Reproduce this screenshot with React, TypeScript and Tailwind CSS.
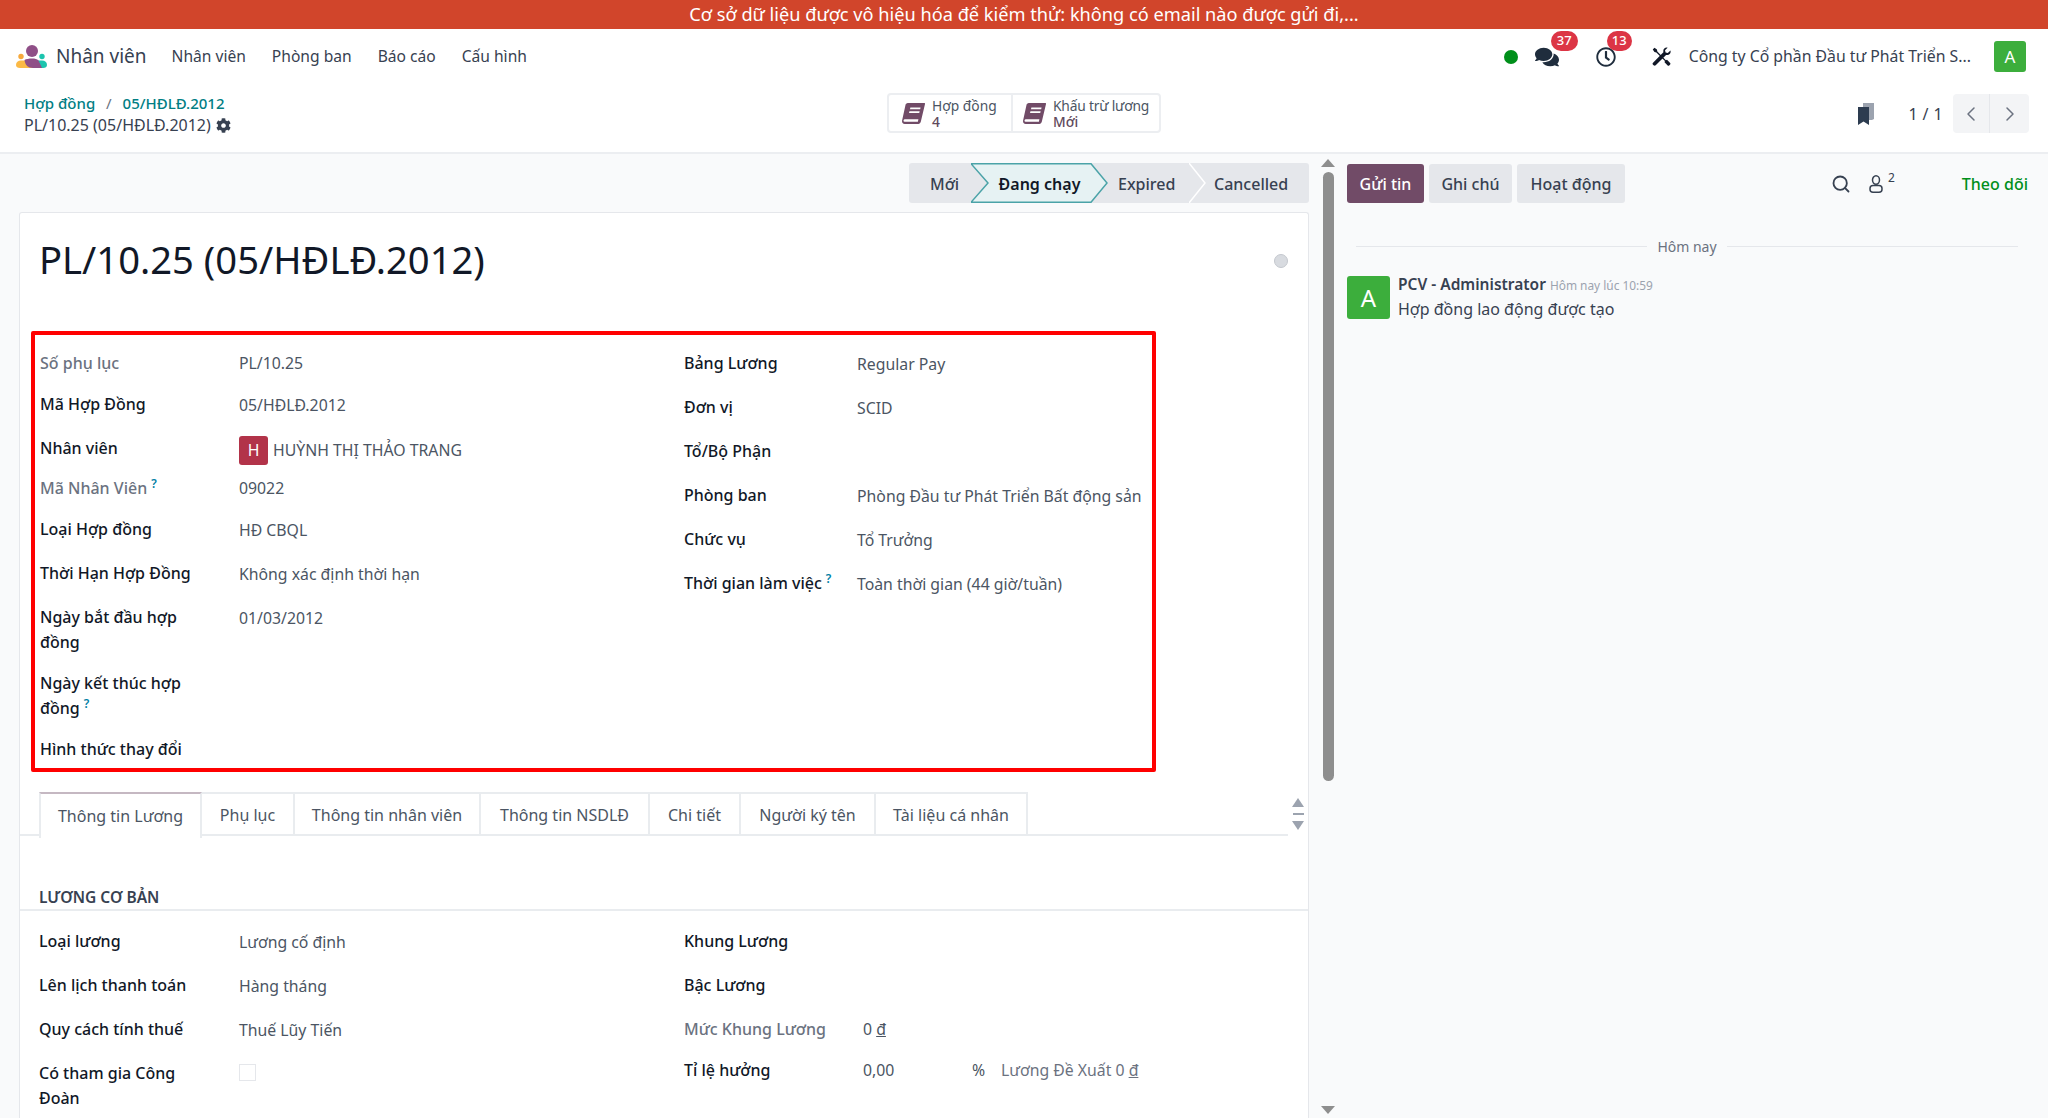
import React from 'react';
import { FaCog, FaComments, FaRegClock } from 'react-icons/fa';
import { ChevronLeft, ChevronRight, Search } from 'lucide-react';

const Help = () => <sup className="ml-1 text-[12px] font-semibold text-[#0180a5]">?</sup>;

const BookIcon = () => (
  <svg viewBox="0 0 24 24" className="h-[25px] w-[25px] shrink-0">
    <path
      fill="#714b67"
      d="M6.6 2H22.2c.7 0 1 .5.8 1.2L19 20c-.3 1.2-1.1 2-2.4 2H3.6C1.9 22 .7 20.6 1 18.9L4.2 4.2C4.5 2.9 5.3 2 6.6 2Zm2.4 4.2-.4 1.6h9.8l.4-1.6H9Zm-.9 3.7-.4 1.6h9.8l.4-1.6H8.100Z"
    />
    <path fill="#fff" d="M3.500 17.400h13.200l-.5 2.500H3.400c-1.400 0-1.300-2.500.1-2.500Z" />
  </svg>
);

const Logo = () => (
  <svg viewBox="0 0 31 23" className="h-[23px] w-[31px] shrink-0">
    <path d="M0 20c0-3 2-4.500 5-4.500h7L18 23H4c-2.500 0-4-1-4-3Z" fill="#fbb945" />
    <path d="M31 20c0-3-2-4.500-5-4.500h-8L24 23h3c2.500 0 4-1 4-3Z" fill="#1cc4ae" />
    <path d="M8.500 15c1.500-1 4.500-1.500 7.500-1.500s5 .5 6.500 2L26 23h-9c-5 0-8-3-8.500-8Z" fill="#8f4f87" />
    <circle cx="16" cy="6" r="6" fill="#8f4f87" />
    <circle cx="5" cy="11.500" r="2.700" fill="#f7a93c" />
    <circle cx="26" cy="11.500" r="2.700" fill="#1cc4ae" />
  </svg>
);

const ToolsIcon = () => (
  <svg viewBox="0 0 20 20" className="ml-[36px] h-[19px] w-[19px] text-[#111827]" fill="currentColor">
    <path d="M2.600.800 5.200 2.700l.4 2 9 9.200 1.200-.4 3.300 3.300c.5.500.5 1.100 0 1.600l-1 1c-.5.500-1.100.500-1.600 0l-3.300-3.300.4-1.300-9-9-2-.5L.800 2.600Z" />
    <path d="M19.400 3.600 16.600 6.300l-2.300-.6-.6-2.300L16.400.700c-2.300-.7-4.700 1.200-4.500 3.700l.1 1.100-10.900 11c-.7.700-.7 1.500 0 2.200l.6.600c.7.700 1.500.7 2.200 0l10.900-11 1.100.1c2.500.2 4.400-2.200 3.500-4.800Z" />
  </svg>
);

const Tab = ({ label, w, active }: { label: string; w: string; active?: boolean }) => (
  <div
    className={`${w} flex items-center justify-center border-r-2 border-[#e9ecef] text-[16px] text-[#4b5563] ${
      active ? 'h-[46px] border-t-2 border-l-2 border-t-[#c5b8c2] bg-white' : 'h-[44px] border-t-2 border-t-[#e9ecef]'
    }`}
  >
    {label}
  </div>
);

const Field = ({
  label,
  value,
  h,
  labelW,
  muted,
  help,
  offset,
}: {
  label: string;
  value?: React.ReactNode;
  h: string;
  labelW: string;
  muted?: boolean;
  help?: boolean;
  offset?: string;
}) => (
  <div className={`flex ${h} items-start`}>
    <div className={`${labelW} shrink-0 text-[16px] leading-[25px] font-medium ${muted ? 'text-[#6b7280]' : 'text-[#111827]'}`}>
      {label}
      {help && <Help />}
    </div>
    <div className={`text-[15.800px] leading-[25px] text-[#4b5563] ${offset ?? ''}`}>{value}</div>
  </div>
);

const LEFT = 'w-[199px] pr-[36px]';
const RIGHT = 'w-[173px] pr-[4px]';

export default function App() {
  return (
    <div className="flex h-[1118px] w-[2048px] flex-col overflow-hidden bg-white font-['Noto_Sans',sans-serif] text-[#374151]">
      <div className="flex h-[29px] shrink-0 items-center justify-center bg-[#d1452b] text-[18.200px] text-white">
        Cơ sở dữ liệu được vô hiệu hóa để kiểm thử: không có email nào được gửi đi,...
      </div>

      {/* nav */}
      <div className="flex h-[57px] shrink-0 items-center pr-[22px] pb-[2px] pl-[16px]">
        <Logo />
        <span className="ml-[9px] text-[19px] text-[#374151]">Nhân viên</span>
        <div className="ml-[25px] flex gap-[26px] text-[15.600px] text-[#374151]">
          <span>Nhân viên</span>
          <span>Phòng ban</span>
          <span>Báo cáo</span>
          <span>Cấu hình</span>
        </div>
        <div className="ml-auto flex items-center">
          <span className="h-[14px] w-[14px] rounded-full bg-[#008f1a]" />
          <div className="relative ml-[17px] text-[#1f2d3d]">
            <FaComments className="h-[24px] w-[24px]" />
            <span className="absolute -top-[14px] left-[16px] flex h-[20px] w-[27px] items-center justify-center rounded-full bg-[#dc3545] text-[13px] font-medium text-white">37</span>
          </div>
          <div className="relative ml-[37px] text-[#1f2d3d]">
            <FaRegClock className="h-[20px] w-[20px]" />
            <span className="absolute -top-[16px] left-[11px] flex h-[20px] w-[25px] items-center justify-center rounded-full bg-[#dc3545] text-[13px] font-medium text-white">13</span>
          </div>
          <ToolsIcon />
          <span className="ml-[18px] text-[15.800px] text-[#374151]">Công ty Cổ phần Đầu tư Phát Triển S...</span>
          <div className="ml-[23px] flex h-[31px] w-[32px] items-center justify-center rounded-[3px] bg-[#3cae3c] text-[17px] text-white">A</div>
        </div>
      </div>

      {/* control panel */}
      <div className="flex h-[68px] shrink-0 items-start border-b-2 border-[#eceef1] pr-[19px] pl-[24px]">
        <div className="w-[863px] pt-[7px] text-[16px] leading-[21px]">
          <div className="mb-[1px] text-[15px] font-medium text-[#017e84]">
            Hợp đồng <span className="mx-[7px] font-normal text-[#6b7280]">/</span> 05/HĐLĐ.2012
          </div>
          <div className="flex items-center">
            PL/10.25 (05/HĐLĐ.2012)
            <FaCog className="ml-[5px] h-[15px] w-[15px] text-[#374151]" />
          </div>
        </div>
        <div className="mt-[7px] flex h-[40px] w-[274px] rounded-[4px] border-2 border-[#eceef1] text-[13.800px] leading-[16px]">
          <div className="flex w-[124px] items-center gap-[6px] border-r-2 border-[#eceef1] pl-[12px]">
            <BookIcon />
            <div className="pt-[2px]">
              <div className="text-[#4b5563]">Hợp đồng</div>
              <div className="font-medium text-[#5f4a5c]">4</div>
            </div>
          </div>
          <div className="flex items-center gap-[6px] pl-[9px]">
            <BookIcon />
            <div className="pt-[2px]">
              <div className="tracking-[-0.2px] text-[#4b5563]">Khấu trừ lương</div>
              <div className="font-medium text-[#5f4a5c]">Mới</div>
            </div>
          </div>
        </div>
        <div className="ml-auto flex items-center pt-[8px]">
          <svg viewBox="0 0 16 22" className="h-[22px] w-[16px]">
            <path d="M5 0h11v16l-2 1H5Z" fill="#9ca3af" />
            <path d="M0 4h11v18l-5.500-3.500L0 22Z" fill="#2d3c50" />
          </svg>
          <span className="ml-[34px] text-[16px] tracking-[0.400px] text-[#374151]">1 / 1</span>
          <div className="ml-[10px] flex h-[39px] w-[76px] rounded-[4px] bg-[#f3f4f6] text-[#6b7280]">
            <div className="flex w-[37px] items-center justify-center border-r border-[#e5e7eb]">
              <ChevronLeft className="h-[24px] w-[24px]" strokeWidth={1.500} />
            </div>
            <div className="flex flex-1 items-center justify-center">
              <ChevronRight className="h-[24px] w-[24px]" strokeWidth={1.500} />
            </div>
          </div>
        </div>
      </div>

      <div className="flex min-h-0 flex-1 overflow-hidden bg-[#f9fafb]">
        {/* form column */}
        <div className="w-[1309px] shrink-0 pt-[9px] pl-[19px]">
          <div className="relative ml-auto flex h-[40px] w-[400px] items-center rounded-[3px] bg-[#e5e7eb] pt-[1px] text-[16px] font-medium text-[#374151]">
            <span className="ml-[21px]">Mới</span>
            <span className="absolute top-0 left-[62px] flex h-[40px] w-[137px] items-center justify-center bg-[#e6f2f3] pt-[1px] font-semibold text-[#111827] [clip-path:polygon(0_0,120px_0,137px_50%,120px_100%,0_100%,17px_50%)]">
              Đang chạy
            </span>
            <svg viewBox="0 0 137 40" className="absolute top-0 left-[62px] h-[40px] w-[137px]" fill="none" stroke="#4ba3a8" strokeWidth="1.500">
              <path d="M0 0.700H120L136 20 120 39.300H0L17 20Z" />
            </svg>
            <span className="absolute left-[209px]">Expired</span>
            <svg viewBox="0 0 18 40" className="absolute top-0 left-[280px] h-[40px] w-[18px]" fill="none" stroke="#fff" strokeWidth="1.500">
              <path d="M0 0L16 20 0 40" />
            </svg>
            <span className="absolute left-[305px]">Cancelled</span>
          </div>

          <div className="mt-[9px] h-[950px] rounded-t-[3px] border-t border-r border-l border-[#e5e7eb] bg-white">
            <div className="flex items-start pt-[18px] pl-[19px]">
              <h1 className="text-[38.200px] leading-[56px] text-[#111827]">PL/10.25 (05/HĐLĐ.2012)</h1>
              <span className="mt-[23px] mr-[20px] ml-auto h-[14px] w-[14px] rounded-full border border-[#c4c8ce] bg-[#d8dbe0]" />
            </div>

            {/* red highlighted group */}
            <div className="mt-[44px] ml-[11px] flex h-[441px] w-[1125px] rounded-[2px] border-[4px] border-[#ff0000] pt-[16px] pl-[5px]">
              <div className="w-[644px]">
                <Field h="h-[41px]" labelW={LEFT} muted label="Số phụ lục" value="PL/10.25" />
                <Field h="h-[44px]" labelW={LEFT} offset="pt-[1px]" label="Mã Hợp Đồng" value="05/HĐLĐ.2012" />
                <Field
                  h="h-[40px]"
                  labelW={LEFT}
                  label="Nhân viên"
                  value={
                    <div className="flex items-center gap-[5px]">
                      <span className="flex h-[29px] w-[29px] items-center justify-center rounded-[3px] bg-[#b23349] text-white">H</span>
                      HUỲNH THỊ THẢO TRANG
                    </div>
                  }
                />
                <Field h="h-[41px]" labelW={LEFT} muted help label="Mã Nhân Viên" value="09022" />
                <Field h="h-[44px]" labelW={LEFT} offset="pt-[1px]" label="Loại Hợp đồng" value="HĐ CBQL" />
                <Field h="h-[44px]" labelW={LEFT} offset="pt-[1px]" label="Thời Hạn Hợp Đồng" value="Không xác định thời hạn" />
                <Field h="h-[66px]" labelW={LEFT} offset="pt-[1px]" label="Ngày bắt đầu hợp đồng" value="01/03/2012" />
                <Field h="h-[66px]" labelW={LEFT} help label="Ngày kết thúc hợp đồng" />
                <Field h="h-[25px]" labelW={LEFT} label="Hình thức thay đổi" />
              </div>
              <div className="flex-1">
                <Field h="h-[44px]" labelW={RIGHT} offset="pt-[1px]" label="Bảng Lương" value="Regular Pay" />
                <Field h="h-[44px]" labelW={RIGHT} offset="pt-[1px]" label="Đơn vị" value="SCID" />
                <Field h="h-[44px]" labelW={RIGHT} label="Tổ/Bộ Phận" />
                <Field h="h-[44px]" labelW={RIGHT} offset="pt-[1px]" label="Phòng ban" value="Phòng Đầu tư Phát Triển Bất động sản" />
                <Field h="h-[44px]" labelW={RIGHT} offset="pt-[1px]" label="Chức vụ" value="Tổ Trưởng" />
                <Field h="h-[44px]" labelW={RIGHT} offset="pt-[1px]" help label="Thời gian làm việc" value="Toàn thời gian (44 giờ/tuần)" />
              </div>
            </div>

            {/* tabs */}
            <div className="relative mt-[20px] mr-[20px] flex h-[44px] border-b-2 border-[#e9ecef] pl-[19px]">
              <Tab active w="w-[163px]" label="Thông tin Lương" />
              <Tab w="w-[93px]" label="Phụ lục" />
              <Tab w="w-[186px]" label="Thông tin nhân viên" />
              <Tab w="w-[169px]" label="Thông tin NSDLĐ" />
              <Tab w="w-[91px]" label="Chi tiết" />
              <Tab w="w-[135px]" label="Người ký tên" />
              <Tab w="w-[152px]" label="Tài liệu cá nhân" />
              <div className="absolute top-[6px] -right-[16px] flex flex-col items-center gap-[6px]">
                <span className="h-0 w-0 border-x-[6px] border-b-[9px] border-x-transparent border-b-[#9ca3af]" />
                <span className="h-[2px] w-[11px] bg-[#9ca3af]" />
                <span className="h-0 w-0 border-x-[6px] border-t-[9px] border-x-transparent border-t-[#9ca3af]" />
              </div>
            </div>

            <div className="mt-[50px] border-b-2 border-[#e9ecef] pb-[1px] pl-[19px] text-[15.500px] leading-[22px] font-semibold text-[#374151]">LƯƠNG CƠ BẢN</div>

            <div className="flex pt-[18px] pl-[19px]">
              <div className="w-[645px]">
                <Field h="h-[44px]" labelW="w-[200px] pr-[36px]" offset="pt-[1px]" label="Loại lương" value="Lương cố định" />
                <Field h="h-[44px]" labelW="w-[200px] pr-[36px]" offset="pt-[1px]" label="Lên lịch thanh toán" value="Hàng tháng" />
                <Field h="h-[44px]" labelW="w-[200px] pr-[36px]" offset="pt-[1px]" label="Quy cách tính thuế" value="Thuế Lũy Tiến" />
                <Field
                  h="h-[66px]"
                  labelW="w-[200px] pr-[36px]"
                  label="Có tham gia Công Đoàn"
                  value={<span className="mt-[3px] block h-[17px] w-[17px] border border-[#e5e7eb]" />}
                />
              </div>
              <div className="flex-1">
                <Field h="h-[44px]" labelW="w-[179px]" label="Khung Lương" />
                <Field h="h-[44px]" labelW="w-[179px]" label="Bậc Lương" />
                <Field h="h-[41px]" labelW="w-[179px]" muted label="Mức Khung Lương" value={<>0 <u>đ</u></>} />
                <Field
                  h="h-[44px]"
                  labelW="w-[179px]"
                  label="Tỉ lệ hưởng"
                  value={
                    <div className="flex">
                      <span className="w-[109px]">0,00</span>
                      <span className="w-[29px]">%</span>
                      <span className="text-[#6b7280]">Lương Đề Xuất 0 <u>đ</u></span>
                    </div>
                  }
                />
              </div>
            </div>
          </div>
        </div>

        {/* page scrollbar */}
        <div className="flex w-[38px] shrink-0 flex-col items-center pt-[5px]">
          <span className="h-0 w-0 border-x-[7px] border-b-[8px] border-x-transparent border-b-[#8e8e8e]" />
          <span className="mt-[5px] h-[609px] w-[11px] rounded-full bg-[#8e8e8e]" />
          <span className="mt-[325px] h-0 w-0 border-x-[7px] border-t-[8px] border-x-transparent border-t-[#8e8e8e]" />
        </div>

        {/* chatter */}
        <div className="min-w-0 flex-1 pt-[10px] pr-[20px]">
          <div className="flex h-[39px] items-center gap-[5px] text-[16px] font-medium">
            <span className="flex h-[39px] w-[77px] items-center justify-center rounded-[3px] bg-[#714b67] text-white">Gửi tin</span>
            <span className="flex h-[39px] w-[83px] items-center justify-center rounded-[3px] bg-[#e5e7eb] text-[#374151]">Ghi chú</span>
            <span className="flex h-[39px] w-[108px] items-center justify-center rounded-[3px] bg-[#e5e7eb] text-[#374151]">Hoạt động</span>
            <Search className="ml-[201px] h-[20px] w-[20px] text-[#374151]" strokeWidth={2.200} />
            <div className="relative ml-[13px]">
              <svg viewBox="0 0 14 18" className="h-[18px] w-[14px]" fill="none" stroke="#374151" strokeWidth="1.500">
                <ellipse cx="7" cy="5" rx="3.500" ry="4.200" />
                <rect x="1" y="10.500" width="12" height="6.700" rx="3" />
              </svg>
              <span className="absolute -top-[6px] left-[19px] text-[12px] font-normal text-[#374151]">2</span>
            </div>
            <span className="ml-auto font-medium text-[#008f1a]">Theo dõi</span>
          </div>

          <div className="mt-[33px] flex items-center gap-[10px] pr-[10px] pl-[9px] text-[14px] text-[#6b7280]">
            <span className="h-[1px] flex-1 bg-[#e5e7eb]" />
            Hôm nay
            <span className="h-[1px] flex-1 bg-[#e5e7eb]" />
          </div>

          <div className="mt-[19px] flex gap-[8px]">
            <div className="flex h-[43px] w-[43px] items-center justify-center rounded-[3px] bg-[#3cae3c] text-[24px] text-white">A</div>
            <div className="-mt-[2px]">
              <div className="flex items-baseline gap-[4px] leading-[20px]">
                <span className="text-[15.500px] font-semibold text-[#374151]">PCV - Administrator</span>
                <span className="text-[11.900px] text-[#9ca3af]">Hôm nay lúc 10:59</span>
              </div>
              <div className="mt-[3px] text-[16px] leading-[22px] text-[#374151]">Hợp đồng lao động được tạo</div>
            </div>
          </div>
        </div>
      </div>
    </div>
  );
}
